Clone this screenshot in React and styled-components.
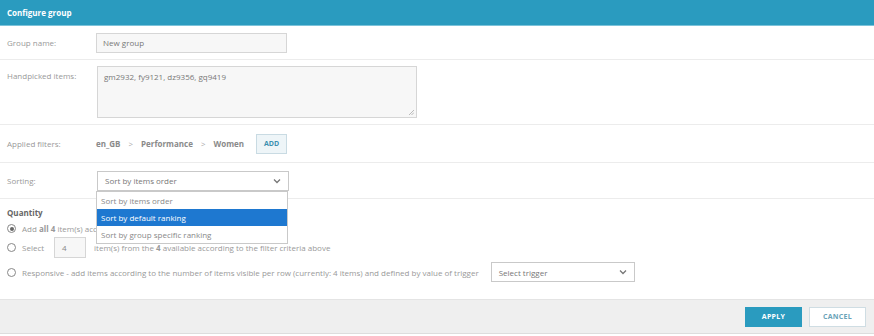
import styled, { createGlobalStyle } from "styled-components";

const GlobalStyle = createGlobalStyle`
  body {
    margin: 0;
    background: #fff;
    font-family: "Open Sans", "Liberation Sans", sans-serif;
  }
`;

const Dialog = styled.div`
  width: 874px;
  height: 336px;
  display: flex;
  flex-direction: column;
  background: #fff;
  overflow: hidden;
`;

const Header = styled.div`
  height: 25px;
  background: #2a9bbf;
  border-bottom: 1px solid #7cc3da;
  display: flex;
  align-items: center;
  padding-left: 7px;
  color: #fff;
  font-size: 8px;
  font-weight: 700;
`;

const Row = styled.div`
  display: flex;
  align-items: ${(p) => (p.top ? "flex-start" : "center")};
  height: ${(p) => p.h}px;
  padding: ${(p) => (p.top ? "6px 0 0" : "0")};
  border-bottom: 1px solid #ececec;
  box-sizing: border-box;
`;

const Label = styled.div`
  width: 96px;
  padding-left: 7px;
  box-sizing: border-box;
  font-size: 8px;
  color: #999;
  padding-top: ${(p) => (p.top ? "4px" : "0")};
`;

const TextInput = styled.div`
  width: 191px;
  height: 20px;
  border: 1px solid #d6d6d6;
  background: #f7f7f7;
  box-sizing: border-box;
  font-size: 8px;
  color: #777;
  display: flex;
  align-items: center;
  padding-left: 6px;
`;

const TextArea = styled.div`
  position: relative;
  width: 320px;
  height: 52px;
  margin-left: 1px;
  border: 1px solid #d6d6d6;
  background: #f7f7f7;
  box-sizing: border-box;
  font-size: 8px;
  color: #777;
  padding: 4px 6px;
`;

const Grip = styled.svg`
  position: absolute;
  right: 2px;
  bottom: 2px;
`;

const Crumbs = styled.div`
  display: flex;
  align-items: center;
  gap: 8px;
  font-size: 8px;
  font-weight: 700;
  color: #8a8a8a;
`;

const Sep = styled.span`
  font-weight: 400;
  color: #aaa;
`;

const AddButton = styled.div`
  width: 31px;
  height: 20px;
  margin-left: 4px;
  border: 1px solid #c9dbe3;
  background: #eef5f8;
  box-sizing: border-box;
  display: flex;
  align-items: center;
  justify-content: center;
  font-size: 7px;
  font-weight: 700;
  color: #3d8fb0;
`;

const SelectWrap = styled.div`
  position: relative;
  margin-left: ${(p) => p.ml || 0}px;
`;

const Select = styled.div`
  width: ${(p) => p.w}px;
  height: 20px;
  border: 1px solid #c9c9c9;
  background: #fff;
  box-sizing: border-box;
  display: flex;
  align-items: center;
  justify-content: space-between;
  padding: 0 7px;
  font-size: 8px;
  color: #777;
`;

const Menu = styled.div`
  position: absolute;
  top: 20px;
  left: -1px;
  width: 192px;
  border: 1px solid #c9c9c9;
  background: #fff;
  box-sizing: border-box;
  z-index: 2;
`;

const MenuItem = styled.div`
  height: 17px;
  display: flex;
  align-items: center;
  padding-left: 4px;
  font-size: 8px;
  background: ${(p) => (p.active ? "#1e78d0" : "#fff")};
  color: ${(p) => (p.active ? "#fff" : "#888")};
`;

const Cursor = styled.svg`
  position: absolute;
  left: 70px;
  top: 24px;
`;

const Quantity = styled.div`
  flex: 1;
  padding: 8px 7px 0;
  display: flex;
  flex-direction: column;
  font-size: 8px;
  color: #999;
`;

const Title = styled.div`
  font-weight: 700;
  color: #666;
  margin-bottom: 2px;
`;

const Option = styled.div`
  display: flex;
  align-items: center;
  gap: 6px;
  height: ${(p) => p.h}px;
  white-space: nowrap;
`;

const Radio = styled.span`
  width: 7px;
  height: 7px;
  border: 1px solid #888;
  border-radius: 50%;
  display: inline-flex;
  align-items: center;
  justify-content: center;
  flex-shrink: 0;
  &::after {
    content: "";
    width: 4px;
    height: 4px;
    border-radius: 50%;
    background: ${(p) => (p.checked ? "#666" : "transparent")};
  }
`;

const SmallInput = styled.div`
  width: 32px;
  height: 21px;
  margin: 0 2px 0 4px;
  border: 1px solid #d6d6d6;
  background: #f7f7f7;
  box-sizing: border-box;
  display: flex;
  align-items: center;
  padding-left: 7px;
  color: #888;
`;

const Footer = styled.div`
  height: 35px;
  background: #efefef;
  border-top: 1px solid #e4e4e4;
  border-bottom: 1px solid #ddd;
  display: flex;
  align-items: center;
  justify-content: flex-end;
  gap: 7px;
  padding-right: 8px;
  box-sizing: border-box;
  margin-bottom: 2px;
`;

const Button = styled.div`
  width: 57px;
  height: 20px;
  box-sizing: border-box;
  display: flex;
  align-items: center;
  justify-content: center;
  font-size: 7px;
  font-weight: 700;
  letter-spacing: 0.3px;
  background: ${(p) => (p.primary ? "#2a9bbf" : "#fff")};
  color: ${(p) => (p.primary ? "#fff" : "#6aa3b8")};
  border: 1px solid ${(p) => (p.primary ? "#2a9bbf" : "#cfdde3")};
`;

const Chevron = () => (
  <svg width="8" height="6" viewBox="0 0 8 6">
    <path d="M1 1.5 L4 4.5 L7 1.5" fill="none" stroke="#777" strokeWidth="1.3" />
  </svg>
);

export default function App() {
  return (
    <Dialog>
      <GlobalStyle />
      <Header>Configure group</Header>

      <Row h={34}>
        <Label>Group name:</Label>
        <TextInput>New group</TextInput>
      </Row>

      <Row h={65} top>
        <Label top>Handpicked items:</Label>
        <TextArea>
          gm2932, fy9121, dz9356, gq9419
          <Grip width="5" height="5" viewBox="0 0 5 5">
            <path d="M0 5 L5 0 M2.5 5 L5 2.5" stroke="#aaa" strokeWidth="0.8" />
          </Grip>
        </TextArea>
      </Row>

      <Row h={38}>
        <Label>Applied filters:</Label>
        <Crumbs>
          <span>en_GB</span>
          <Sep>&gt;</Sep>
          <span>Performance</span>
          <Sep>&gt;</Sep>
          <span>Women</span>
          <AddButton>ADD</AddButton>
        </Crumbs>
      </Row>

      <Row h={36}>
        <Label>Sorting:</Label>
        <SelectWrap ml={1}>
          <Select w={192}>
            <span>Sort by items order</span>
            <Chevron />
          </Select>
          <Menu>
            <MenuItem>Sort by items order</MenuItem>
            <MenuItem active>Sort by default ranking</MenuItem>
            <MenuItem>Sort by group specific ranking</MenuItem>
          </Menu>
          <Cursor width="12" height="16" viewBox="0 0 12 16">
            <path d="M1 1 L1 13 L4 10 L6.5 15 L8.5 14 L6 9 L10 9 Z" fill="#111" stroke="#fff" strokeWidth="1" />
          </Cursor>
        </SelectWrap>
      </Row>

      <Quantity>
        <Title>Quantity</Title>
        <Option h={17}>
          <Radio checked />
          <span>
            Add <b>all 4</b> item(s) according to the filter criteria above
          </span>
        </Option>
        <Option h={20}>
          <Radio />
          <span>Select</span>
          <SmallInput>4</SmallInput>
          <span>
            item(s) from the <b>4</b> available according to the filter criteria above
          </span>
        </Option>
        <Option h={30}>
          <Radio />
          <span>
            Responsive - add items according to the number of items visible per row (currently: 4 items) and defined by value of trigger
          </span>
          <SelectWrap ml={6}>
            <Select w={144}>
              <span>Select trigger</span>
              <Chevron />
            </Select>
          </SelectWrap>
        </Option>
      </Quantity>

      <Footer>
        <Button primary>APPLY</Button>
        <Button>CANCEL</Button>
      </Footer>
    </Dialog>
  );
}
